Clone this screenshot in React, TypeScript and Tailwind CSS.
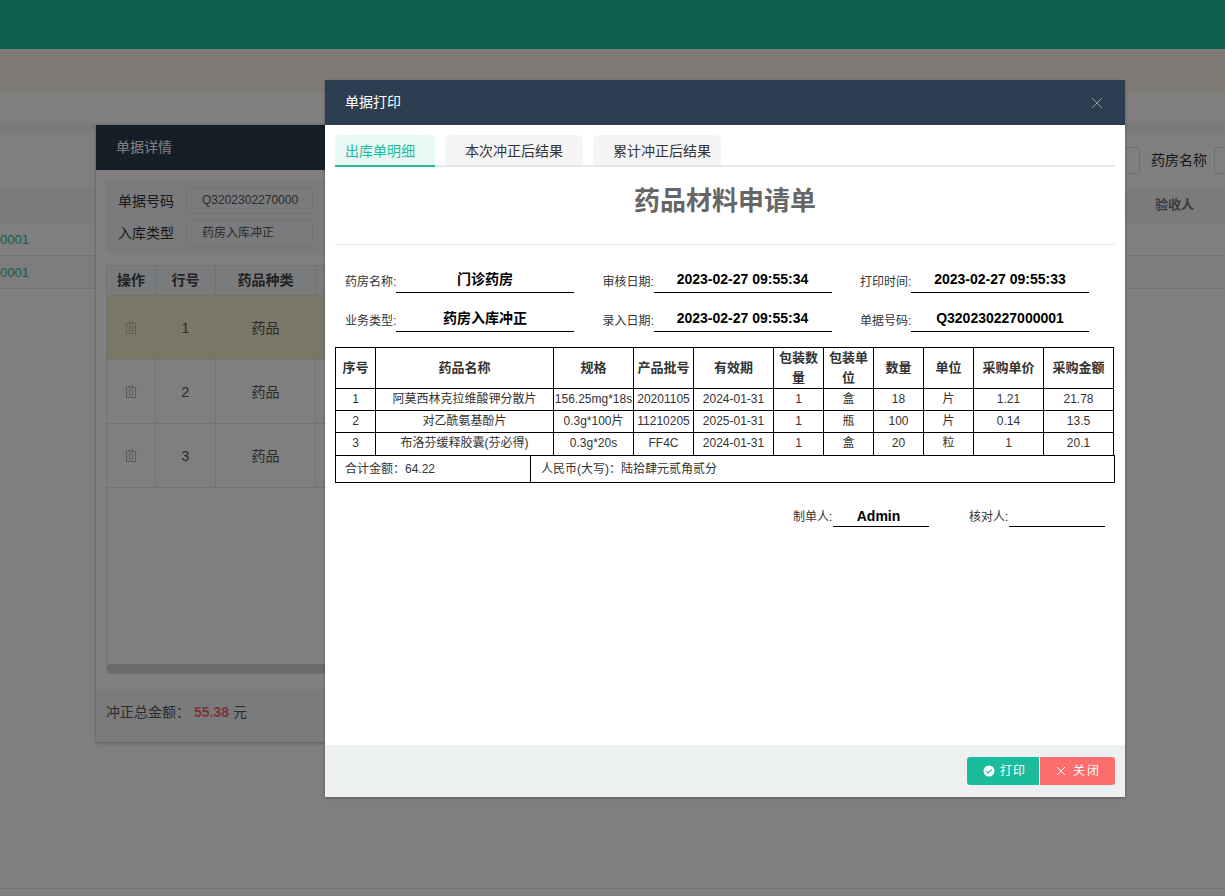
import React from "react";

const font = "font-['Liberation_Sans','Noto_Sans_CJK_SC',sans-serif]";

const TrashIcon = () => (
  <svg width="12" height="13" viewBox="0 0 12 13" fill="none" stroke="#bbbbbb" strokeWidth="1">
    <path d="M0.5 2.5H11.5" />
    <path d="M4 2.5V0.8H8V2.5" />
    <rect x="1.5" y="2.5" width="9" height="10" />
    <rect x="4.5" y="5" width="3" height="5" />
  </svg>
);

const InfoField = ({ label, value }: { label: string; value: string }) => (
  <div className="flex w-[257.5px] items-end">
    <span className="text-[12px] leading-[20px] mb-[1px] text-[#333] w-[51px] shrink-0 whitespace-nowrap">{label}</span>
    <span className="w-[178px] h-[26px] border-b border-black text-center text-[14px] leading-[25px] font-bold text-black whitespace-nowrap">
      {value}
    </span>
  </div>
);

const heads: [string, number][] = [
  ["序号", 40],
  ["药品名称", 178],
  ["规格", 80],
  ["产品批号", 60],
  ["有效期", 80],
  ["包装数量", 50],
  ["包装单位", 50],
  ["数量", 50],
  ["单位", 50],
  ["采购单价", 70],
  ["采购金额", 70],
];

const rows = [
  ["1", "阿莫西林克拉维酸钾分散片", "156.25mg*18s", "20201105", "2024-01-31", "1", "盒", "18", "片", "1.21", "21.78"],
  ["2", "对乙酰氨基酚片", "0.3g*100片", "11210205", "2025-01-31", "1", "瓶", "100", "片", "0.14", "13.5"],
  ["3", "布洛芬缓释胶囊(芬必得)", "0.3g*20s", "FF4C", "2024-01-31", "1", "盒", "20", "粒", "1", "20.1"],
];

const detailRows = [
  { n: "1", bg: "bg-[#f5eed3]" },
  { n: "2", bg: "bg-white" },
  { n: "3", bg: "bg-white" },
];

export default function App() {
  return (
    <div className={`${font} relative h-[896px] w-full overflow-hidden bg-white text-[14px] flex flex-col`}>
      {/* base page */}
      <div className="h-[49px] shrink-0 bg-[#1abc9c]" />
      <div className="h-[44px] shrink-0 bg-[#fdf6ec]" />
      <div className="h-[30px] shrink-0 bg-white" />
      <div className="h-[10px] shrink-0 bg-[#f0f2f5]" />
      <div className="h-[54px] shrink-0 flex items-center justify-end">
        <div className="w-[30px] h-[27px] border border-[#dcdfe6] rounded-[4px] mr-[11px]" />
        <span className="text-[14px] text-[#333] mr-[7px]">药房名称</span>
        <div className="w-[11px] h-[27px] border border-r-0 border-[#dcdfe6] rounded-l-[4px]" />
      </div>
      <div className="h-[36px] shrink-0 bg-[#f5f7fa] flex items-center justify-end pr-[31px]">
        <span className="font-bold text-[13px] text-[#777]">验收人</span>
      </div>
      <div className="h-[33px] shrink-0 border-b border-[#e5e6ea] flex items-center pt-[2px]">
        <div className="w-[29px] flex justify-end overflow-hidden text-[#1abc9c] text-[13px]">Q320230227000001</div>
      </div>
      <div className="h-[33px] shrink-0 border-b border-[#e5e6ea] bg-[#fafafa] flex items-center pt-[2px]">
        <div className="w-[29px] flex justify-end overflow-hidden text-[#1abc9c] text-[13px]">Q320230227000001</div>
      </div>
      <div className="flex-1" />
      <div className="h-[8px] shrink-0 border-t border-[#e5e6ea]" />

      {/* detail dialog */}
      <div className="absolute left-[96px] top-[125px] w-[1000px] h-[617px] bg-white shadow-[0_1px_3px_rgba(0,0,0,0.3)] flex flex-col">
        <div className="h-[45px] shrink-0 bg-[#2c3e50] flex items-center pl-[20px] text-white text-[14px]">单据详情</div>
        <div className="flex-1 flex flex-col px-[10px] pt-[10px]">
          <div className="h-[74px] shrink-0 bg-[#f5f7fa] pl-[12px] pt-[7px] flex flex-col gap-[6px]">
            {[
              ["单据号码", "Q3202302270000"],
              ["入库类型", "药房入库冲正"],
            ].map(([l, v], i) => (
              <div key={l} className="flex items-center h-[27px]">
                <span className={`w-[68px] text-[#333] text-[14px] ${i === 0 ? "pt-[2px]" : ""}`}>{l}</span>
                <div className="w-[127px] h-[27px] border border-[#e4e7ed] rounded-[4px] pl-[15px] text-[12px] leading-[24px] text-[#555] overflow-hidden whitespace-nowrap">
                  {v}
                </div>
              </div>
            ))}
          </div>
          <div className="mt-[11px] h-[409px] shrink-0 border border-[#e4e7ed] flex flex-col">
            <div className="h-[30px] shrink-0 bg-[#f5f7fa] flex font-bold text-[#444] text-[14px] border-b border-[#e4e7ed]">
              <div className="w-[49px] border-r border-[#e4e7ed] flex items-center justify-center">操作</div>
              <div className="w-[60px] border-r border-[#e4e7ed] flex items-center justify-center">行号</div>
              <div className="w-[100px] border-r border-[#e4e7ed] flex items-center justify-center">药品种类</div>
            </div>
            {detailRows.map((r) => (
              <div key={r.n} className={`h-[64px] shrink-0 flex ${r.bg} border-b border-[#e4e7ed] text-[#555] text-[14px]`}>
                <div className="w-[49px] border-r border-[#e4e7ed] flex items-center justify-center">
                  <TrashIcon />
                </div>
                <div className="w-[60px] border-r border-[#e4e7ed] flex items-center justify-center pt-[2px]">{r.n}</div>
                <div className="w-[100px] border-r border-[#e4e7ed] flex items-center justify-center pt-[2px]">药品</div>
                <div className="flex-1" />
              </div>
            ))}
            <div className="flex-1" />
            <div className="h-[9px] shrink-0 bg-[#d4d4d4] rounded-[4px]" />
          </div>
          <div className="flex-1" />
        </div>
        <div className="h-[52px] shrink-0 bg-[#f5f7fa] flex items-start pt-[12px] pl-[10px] text-[14px] leading-[20px] text-[#555]">
          <span>冲正总金额：</span>
          <span className="ml-[4px] font-bold text-[#f56c6c]">55.38</span>
          <span className="ml-[4px]">元</span>
        </div>
      </div>

      {/* mask */}
      <div className="absolute inset-0 bg-black/50" />

      {/* print dialog */}
      <div className="absolute left-[325px] top-[80px] w-[800px] h-[717px] bg-white shadow-[0_1px_3px_rgba(0,0,0,0.3)] flex flex-col">
        <div className="h-[45px] shrink-0 bg-[#2c3e50] flex items-center justify-between pl-[20px] pr-[22px] text-white text-[14px]">
          <span>单据打印</span>
          <svg width="12" height="12" viewBox="0 0 12 12" stroke="#8f9aa5" strokeWidth="1" fill="none">
            <path d="M1 1L11 11M11 1L1 11" />
          </svg>
        </div>

        <div className="flex-1 flex flex-col px-[10px] pt-[10px] min-h-0">
          {/* tabs */}
          <div className="h-[32px] shrink-0 flex border-b-2 border-[#e4e7ed]">
            <div className="w-[100px] h-[32px] bg-[#e8f8f5] rounded-t-[6px] border-b-2 border-[#1abc9c] pl-[10px] pt-[6px] text-[14px] leading-[20px] text-[#1abc9c]">
              出库单明细
            </div>
            <div className="ml-[10px] w-[138px] h-[30px] bg-[#f4f4f5] rounded-t-[6px] pl-[20px] pt-[6px] text-[14px] leading-[20px] text-[#333] whitespace-nowrap">
              本次冲正后结果
            </div>
            <div className="ml-[10px] w-[128px] h-[30px] bg-[#f4f4f5] rounded-t-[6px] pl-[20px] pt-[6px] text-[14px] leading-[20px] text-[#333] whitespace-nowrap">
              累计冲正后结果
            </div>
          </div>

          <div className="h-[67px] shrink-0 flex justify-center pt-[17px] text-[26px] leading-[34px] font-bold text-[#666]">
            药品材料申请单
          </div>
          <div className="h-px shrink-0 mt-[10px] bg-[#dfe4ec]" />

          {/* info */}
          <div className="pl-[10px] pt-[22px] flex flex-wrap w-[790px] gap-y-[13px]">
            <InfoField label="药房名称:" value="门诊药房" />
            <InfoField label="审核日期:" value="2023-02-27 09:55:34" />
            <InfoField label="打印时间:" value="2023-02-27 09:55:33" />
            <InfoField label="业务类型:" value="药房入库冲正" />
            <InfoField label="录入日期:" value="2023-02-27 09:55:34" />
            <InfoField label="单据号码:" value="Q320230227000001" />
          </div>

          {/* table */}
          <table className="mt-[15px] w-[778px] table-fixed border-collapse text-[12px] text-[#333] shrink-0">
            <colgroup>
              {heads.map(([h, w]) => (
                <col key={h} style={{ width: w }} />
              ))}
            </colgroup>
            <thead>
              <tr className="h-[41px]">
                {heads.map(([h]) => (
                  <th key={h} className="border border-black font-bold text-[13px] leading-[20px] p-0 text-center text-[#333]">
                    {h}
                  </th>
                ))}
              </tr>
            </thead>
            <tbody>
              {rows.map((r) => (
                <tr key={r[0]} className="h-[22px]">
                  {r.map((c, i) => (
                    <td key={i} className="border border-black border-b-0 p-0 text-center whitespace-nowrap leading-[21px]">
                      {c}
                    </td>
                  ))}
                </tr>
              ))}
            </tbody>
          </table>
          <div className="h-[28px] w-[780px] shrink-0 border border-black flex text-[12px] text-[#333]">
            <div className="w-[195px] border-r border-black pl-[9px] leading-[26px]">合计金额：64.22</div>
            <div className="flex-1 pl-[10px] leading-[26px]">人民币(大写)：陆拾肆元贰角贰分</div>
          </div>

          {/* signatures */}
          <div className="mt-[22px] flex justify-end pr-[10px] gap-[40px]">
            <div className="flex items-end">
              <span className="text-[12px] leading-[20px] text-[#333] w-[40px] whitespace-nowrap">制单人:</span>
              <span className="w-[96px] h-[22px] border-b border-black pr-[5px] text-center text-[14px] leading-[23px] font-bold text-black">Admin</span>
            </div>
            <div className="flex items-end">
              <span className="text-[12px] leading-[20px] text-[#333] w-[40px] whitespace-nowrap">核对人:</span>
              <span className="w-[96px] h-[22px] border-b border-black" />
            </div>
          </div>
        </div>

        {/* footer */}
        <div className="h-[52px] shrink-0 bg-[#ecf0f1] flex items-start justify-end pt-[12px] pr-[10px]">
          <button className="h-[28px] w-[72px] bg-[#1abc9c] rounded-l-[3px] flex items-center pl-[16px] gap-[5px] text-white text-[12px] tracking-[1px]">
            <svg width="12" height="12" viewBox="0 0 12 12">
              <circle cx="6" cy="6" r="5.5" fill="#ffffff" />
              <path d="M3.3 6.1L5.2 8L8.8 4.4" stroke="#1abc9c" strokeWidth="1.2" fill="none" />
            </svg>
            <span>打印</span>
          </button>
          <button className="ml-px h-[28px] w-[75px] bg-[#fc6d6d] rounded-r-[3px] flex items-center pl-[16px] gap-[7px] text-white text-[12px] tracking-[2px]">
            <svg width="10" height="10" viewBox="0 0 10 10" stroke="#ffffff" strokeWidth="1" fill="none">
              <path d="M1 1L9 9M9 1L1 9" />
            </svg>
            <span>关闭</span>
          </button>
        </div>
      </div>
    </div>
  );
}
